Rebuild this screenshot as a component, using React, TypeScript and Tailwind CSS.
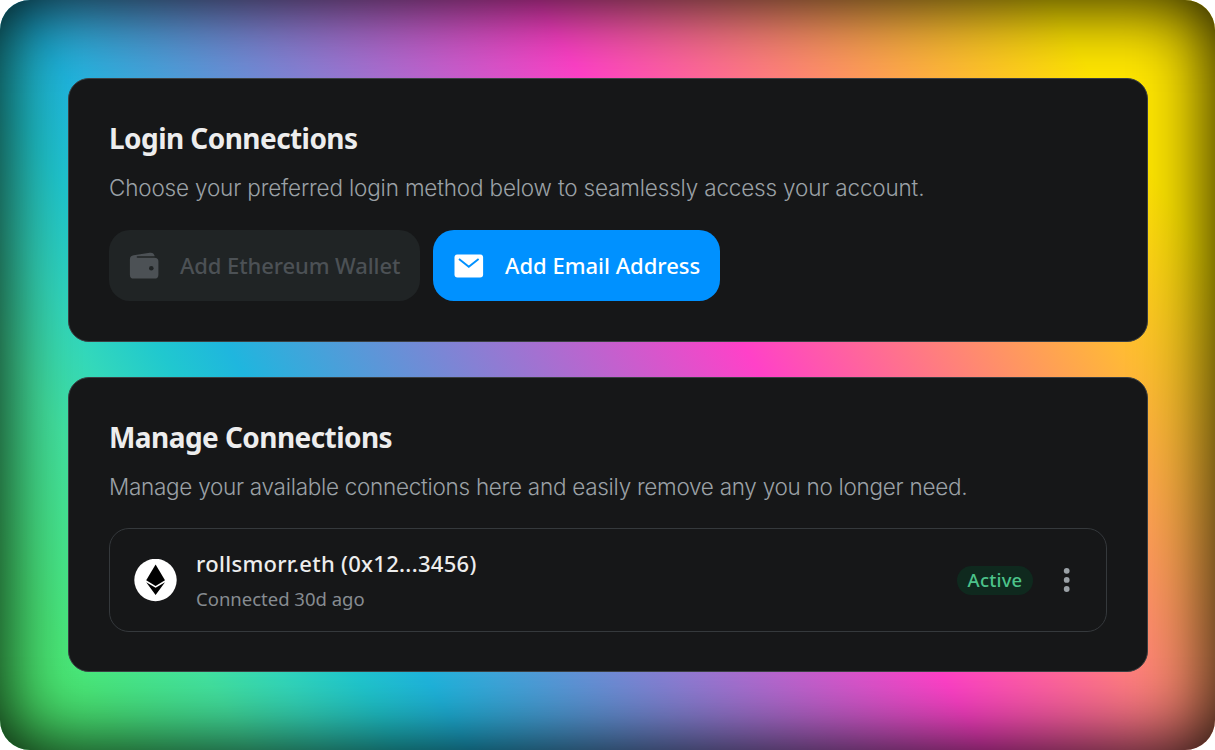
import type { ReactNode } from "react";

function Card({ title, description, children, className }: { title: string; description: ReactNode; children: ReactNode; className: string }) {
  return (
    <section className={`rounded-[21px] border border-[#3a3f42] bg-[#161718] px-[40px] ${className}`}>
      <h2 className="mt-[40px] h-[38px] whitespace-nowrap font-['Noto_Sans',sans-serif] text-[28px] font-bold leading-[38px] tracking-[-0.56px] text-[#ededed]">{title}</h2>
      <p className="mt-[15px] h-[32px] whitespace-nowrap font-[Inter,sans-serif] text-[22.5px] font-light leading-[32px] text-[#9ba1a6]">{description}</p>
      {children}
    </section>
  );
}

function WalletIcon() {
  return (
    <svg width="30" height="28" viewBox="0 0 30 28" fill="#4c5155" className="shrink-0">
      <path d="M.9 7.400C.9 4.900 2.200 3.600 4.700 3.200L20.800.8C23.500.4 25.200 1.700 25.700 4.200H8.700C7.200 4.200 7.300 5.700 8.700 5.700H25.300C28.200 5.700 29.400 7 29.400 9.300V22.700C29.400 25.200 28 26.600 25.600 26.600H4.600C2.200 26.600.9 25.200.9 22.700Z" />
      <circle cx="22.300" cy="16.300" r="2.300" fill="#202425" />
    </svg>
  );
}

function MailIcon() {
  return (
    <svg width="30" height="24" viewBox="0 0 30 24" className="shrink-0">
      <rect x=".5" y=".6" width="28.600" height="22.800" rx="3" fill="#fff" />
      <path d="M5 5.100 14.800 12.800 24.600 5.100" fill="none" stroke="#0091ff" strokeWidth="1.900" />
    </svg>
  );
}

function EthereumLogo() {
  return (
    <svg width="43" height="43" viewBox="0 0.500 43 43" className="shrink-0">
      <circle cx="21.500" cy="21.500" r="21.200" fill="#fff" />
      <path d="M21.600 6 31 21.800 21.600 27.400 12.200 21.800Z" fill="#000" />
      <path d="M12.200 23.700 21.600 29.200 31 23.700 21.600 36.500Z" fill="#000" />
    </svg>
  );
}

export default function App() {
  return (
    <main className="flex h-[750px] w-[1215px] flex-col gap-[35px] overflow-hidden rounded-[30px] bg-[linear-gradient(59deg,#4eee62_0%,#4ae97a_7.500%,#43e3a0_15%,#33d8bb_19.500%,#20c8cf_24%,#1fb6de_28.200%,#ff41c8_59.200%,#ffe600_90%)] px-[68px] pt-[78px] shadow-[inset_0_0_76px_#000]">
      <Card className="h-[264px] w-[1080px]" title="Login Connections" description={<span className="tracking-[-0.175px]">Choose your preferred login method below to seamlessly access your account.</span>}>
        <div className="mt-[26px] flex gap-[13px] font-['Noto_Sans',sans-serif] text-[22px] font-medium">
          <button disabled className="flex h-[71px] w-[311px] items-center rounded-[21px] bg-[#202425] pl-[20px] text-[#4c5155]">
            <WalletIcon />
            <span className="ml-[21px] whitespace-nowrap tracking-[-0.1px]">Add Ethereum Wallet</span>
          </button>
          <button className="flex h-[71px] w-[287px] items-center rounded-[21px] bg-[#0091ff] pl-[21px] text-white">
            <MailIcon />
            <span className="ml-[21px] whitespace-nowrap">Add Email Address</span>
          </button>
        </div>
      </Card>
      <Card className="h-[295px] w-[1080px]" title="Manage Connections" description={<span className="tracking-[-0.28px]">Manage your available connections here and easily remove any you no longer need.</span>}>
        <div className="mt-[25px] flex h-[104px] w-[998px] items-center rounded-[20px] border border-[#35393c] pl-[24px] font-['Noto_Sans',sans-serif]">
          <EthereumLogo />
          <div className="ml-[19px] flex flex-col whitespace-nowrap">
            <span className="h-[36px] text-[22px] font-medium leading-[36px] tracking-[0.3px] text-[#ededed]">rollsmorr.eth (0x12...3456)</span>
            <span className="h-[34px] text-[18.500px] leading-[36px] text-[#868c91]">Connected 30d ago</span>
          </div>
          <span className="ml-auto flex h-[29px] w-[76px] items-center justify-center rounded-full bg-[#0f291e] text-[18.500px] font-medium tracking-[0.2px] text-[#4cc38a]">Active</span>
          <button className="ml-[24px] mr-[29px]">
            <svg width="20" height="28" viewBox="0 0 20 28" fill="#9ba1a6">
              <circle cx="9.700" cy="4.800" r="2.900" />
              <circle cx="9.700" cy="13.900" r="2.900" />
              <circle cx="9.700" cy="23" r="2.900" />
            </svg>
          </button>
        </div>
      </Card>
    </main>
  );
}
